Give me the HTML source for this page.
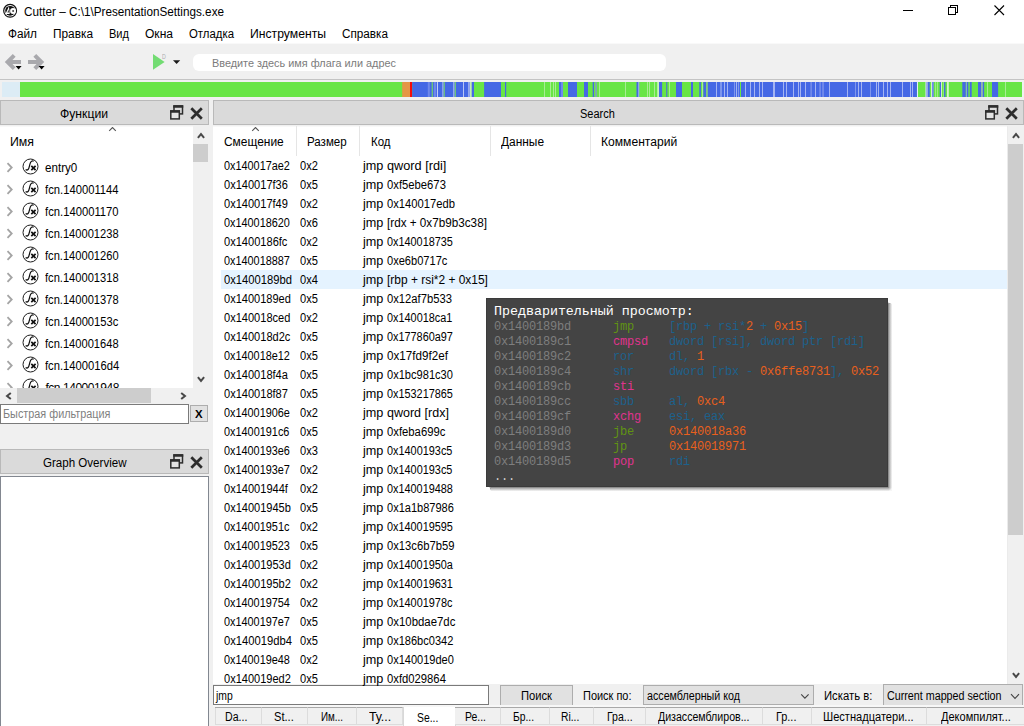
<!DOCTYPE html>
<html lang="ru"><head><meta charset="utf-8"><title>Cutter – C:\1\PresentationSettings.exe</title>
<style>
html,body{margin:0;padding:0}
body{width:1024px;height:726px;overflow:hidden;position:relative;background:#f0f0f0;font-family:"Liberation Sans", sans-serif;font-size:12px;color:#000}
.a{position:absolute;display:block}
.t{position:absolute;white-space:pre;line-height:16px;height:16px;transform-origin:0 0}
.tt{position:absolute;left:493.9px;white-space:pre;font-family:"Liberation Mono", monospace;font-size:12px;letter-spacing:-0.2px;line-height:15px;height:15px}
</style></head><body>
<div class="a" style="left:0px;top:0px;width:1024px;height:44px;background:#fff;"></div>
<svg class="a" style="left:2px;top:3px" width="16" height="16" viewBox="0 0 16 16"><circle cx="8.1" cy="7.8" r="6.4" fill="#fff" stroke="#111" stroke-width="1.2"/><circle cx="8.1" cy="7.8" r="4.9" fill="#111"/><path d="M7.0 3.3 L3.4 10.9 L7.7 10.9 Z" fill="#fff"/><path d="M6.6 6.6 L5.4 9.6 L6.9 9.6 Z" fill="#222"/><circle cx="11.0" cy="8" r="2.9" fill="#fff"/><circle cx="11.1" cy="8" r="1.0" fill="#444"/></svg>
<svg class="a" style="left:896px;top:0" width="128" height="22" viewBox="0 0 128 22" fill="none" stroke="#000" stroke-width="1" shape-rendering="crispEdges"><path d="M7 10.5 H17"/><rect x="52.5" y="7.5" width="7" height="7"/><path d="M54.5 7.5 V5.5 H61.5 V12.5 H59.5"/></svg>
<svg class="a" style="left:990px;top:0" width="20" height="22" viewBox="0 0 20 22" fill="none" stroke="#000" stroke-width="1.1"><path d="M4.5 5.5 L14 15 M14 5.5 L4.5 15"/></svg>
<div class="a" style="left:0px;top:43px;width:1024px;height:1px;background:#f9f9f9;"></div>
<div class="a" style="left:0px;top:44px;width:1024px;height:35px;background:#f0f0f0;"></div>
<div class="a" style="left:0px;top:79px;width:1024px;height:1px;background:#c4c4c4;"></div>
<svg class="a" style="left:0;top:50px" width="50" height="24" viewBox="0 0 50 24"><g fill="none" stroke="#a9a9ad" stroke-width="4" stroke-linejoin="miter"><path d="M14.2 5.4 L7.6 12 L14.2 18.6"/><path d="M8 12 H21"/><path d="M34.8 5.4 L41.4 12 L34.8 18.6"/><path d="M28 12 H41"/></g><path d="M15.6 16 H21.6 L18.6 19.6 Z M38.6 16 H44.6 L41.6 19.6 Z" fill="#000"/></svg>
<svg class="a" style="left:150px;top:50px" width="36" height="24" viewBox="0 0 36 24"><path d="M3 4 L14.6 12 L3 19.8 Z" fill="#73dc73"/><path d="M23 10.2 H30.2 L26.6 14 Z" fill="#1a1a1a"/></svg>
<div class="a" style="left:193px;top:54px;width:473px;height:17px;background:#fff;border-radius:6px;"></div>
<svg class="a" style="left:0;top:82px" width="1024" height="15" viewBox="0 0 1024 15"><rect x="2.00" y="0" width="1020.00" height="15" fill="#68e545"/><rect x="2.00" y="0" width="18.00" height="15" fill="#dcecf5"/><rect x="402.20" y="0" width="7.80" height="15" fill="#e59645"/><rect x="410.00" y="0" width="2.20" height="15" fill="#f40b0b"/><rect x="412.20" y="0" width="61.80" height="15" fill="#4568e5"/><rect x="427.80" y="0" width="2.00" height="15" fill="#7089ea"/><rect x="431.60" y="0" width="1.40" height="15" fill="#6cc37a"/><rect x="433.90" y="0" width="2.00" height="15" fill="#7089ea"/><rect x="436.95" y="0" width="1.02" height="15" fill="#c5d0f5"/><rect x="442.30" y="0" width="1.25" height="15" fill="#a8b8f0"/><rect x="443.70" y="0" width="1.20" height="15" fill="#6cc37a"/><rect x="453.20" y="0" width="1.30" height="15" fill="#a8b8f0"/><rect x="454.70" y="0" width="1.30" height="15" fill="#6cc37a"/><rect x="463.00" y="0" width="1.00" height="15" fill="#b8c5f3"/><rect x="468.20" y="0" width="1.50" height="15" fill="#a8b8f0"/><rect x="470.00" y="0" width="1.70" height="15" fill="#c0f0b0"/><rect x="484.10" y="0" width="16.90" height="15" fill="#4568e5"/><rect x="505.00" y="0" width="1.20" height="15" fill="#4568e5"/><rect x="544.00" y="0" width="1.00" height="15" fill="#a8ec94"/><rect x="550.00" y="0" width="1.00" height="15" fill="#a8ec94"/><rect x="553.00" y="0" width="1.00" height="15" fill="#a8ec94"/><rect x="555.00" y="0" width="1.00" height="15" fill="#a8ec94"/><rect x="599.00" y="0" width="1.00" height="15" fill="#a8ec94"/><rect x="625.00" y="0" width="1.00" height="15" fill="#a8ec94"/><rect x="647.00" y="0" width="1.00" height="15" fill="#a8ec94"/><rect x="649.00" y="0" width="1.00" height="15" fill="#a8ec94"/><rect x="654.00" y="0" width="1.00" height="15" fill="#a8ec94"/><rect x="669.00" y="0" width="1.00" height="15" fill="#a8ec94"/><rect x="702.00" y="0" width="1.00" height="15" fill="#a8ec94"/><rect x="1005.00" y="0" width="1.00" height="15" fill="#a8ec94"/><rect x="987.00" y="0" width="1.00" height="15" fill="#a8ec94"/><rect x="559.00" y="0" width="2.00" height="15" fill="#4568e5"/><rect x="561.00" y="0" width="2.00" height="15" fill="#6f8aec"/><rect x="568.00" y="0" width="9.00" height="15" fill="#4568e5"/><rect x="584.00" y="0" width="4.00" height="15" fill="#4568e5"/><rect x="592.70" y="0" width="1.30" height="15" fill="#4568e5"/><rect x="595.00" y="0" width="2.00" height="15" fill="#7aaeaa"/><rect x="636.50" y="0" width="1.50" height="15" fill="#4568e5"/><rect x="638.00" y="0" width="1.30" height="15" fill="#8ea3ee"/><rect x="657.40" y="0" width="1.40" height="15" fill="#dff7d8"/><rect x="659.00" y="0" width="3.10" height="15" fill="#4568e5"/><rect x="666.30" y="0" width="1.00" height="15" fill="#4568e5"/><rect x="676.00" y="0" width="6.00" height="15" fill="#4568e5"/><rect x="691.00" y="0" width="2.00" height="15" fill="#4568e5"/><rect x="699.30" y="0" width="1.60" height="15" fill="#4568e5"/><rect x="703.40" y="0" width="2.90" height="15" fill="#4568e5"/><rect x="706.30" y="0" width="1.50" height="15" fill="#8fd080"/><rect x="707.80" y="0" width="209.10" height="15" fill="#4568e5"/><rect x="716.00" y="0" width="1.00" height="15" fill="#a4b4f2"/><rect x="724.00" y="0" width="1.00" height="15" fill="#a4b4f2"/><rect x="727.00" y="0" width="1.00" height="15" fill="#a4b4f2"/><rect x="736.00" y="0" width="1.00" height="15" fill="#a4b4f2"/><rect x="745.00" y="0" width="1.00" height="15" fill="#a4b4f2"/><rect x="750.00" y="0" width="1.00" height="15" fill="#a4b4f2"/><rect x="754.00" y="0" width="1.00" height="15" fill="#a4b4f2"/><rect x="759.00" y="0" width="1.00" height="15" fill="#a4b4f2"/><rect x="762.00" y="0" width="1.00" height="15" fill="#a4b4f2"/><rect x="783.00" y="0" width="1.00" height="15" fill="#a4b4f2"/><rect x="786.00" y="0" width="1.00" height="15" fill="#a4b4f2"/><rect x="793.00" y="0" width="1.00" height="15" fill="#a4b4f2"/><rect x="798.00" y="0" width="1.00" height="15" fill="#a4b4f2"/><rect x="800.00" y="0" width="1.00" height="15" fill="#a4b4f2"/><rect x="805.00" y="0" width="1.00" height="15" fill="#a4b4f2"/><rect x="815.00" y="0" width="1.00" height="15" fill="#a4b4f2"/><rect x="829.00" y="0" width="1.00" height="15" fill="#a4b4f2"/><rect x="847.00" y="0" width="1.00" height="15" fill="#a4b4f2"/><rect x="858.00" y="0" width="1.00" height="15" fill="#a4b4f2"/><rect x="861.00" y="0" width="1.00" height="15" fill="#a4b4f2"/><rect x="876.00" y="0" width="1.00" height="15" fill="#a4b4f2"/><rect x="878.00" y="0" width="1.00" height="15" fill="#a4b4f2"/><rect x="883.00" y="0" width="1.00" height="15" fill="#a4b4f2"/><rect x="887.00" y="0" width="1.00" height="15" fill="#a4b4f2"/><rect x="890.00" y="0" width="1.00" height="15" fill="#a4b4f2"/><rect x="902.00" y="0" width="1.00" height="15" fill="#a4b4f2"/><rect x="910.00" y="0" width="1.00" height="15" fill="#a4b4f2"/><rect x="912.00" y="0" width="1.00" height="15" fill="#a4b4f2"/><rect x="734.00" y="0" width="1.00" height="15" fill="#8097ec"/><rect x="738.00" y="0" width="1.00" height="15" fill="#8097ec"/><rect x="855.00" y="0" width="1.00" height="15" fill="#8097ec"/><rect x="870.00" y="0" width="1.00" height="15" fill="#8097ec"/><rect x="720.00" y="0" width="2.00" height="15" fill="#7c95ec"/><rect x="810.30" y="0" width="1.70" height="15" fill="#7089ea"/><rect x="819.20" y="0" width="1.80" height="15" fill="#7089ea"/><rect x="822.10" y="0" width="1.90" height="15" fill="#7089ea"/><rect x="740.00" y="0" width="1.00" height="15" fill="#68e545"/><rect x="773.00" y="0" width="2.00" height="15" fill="#a4b4f2"/><rect x="917.00" y="0" width="1.00" height="15" fill="#e4eef5"/><rect x="925.30" y="0" width="0.70" height="15" fill="#c4e6d0"/><rect x="926.00" y="0" width="1.90" height="15" fill="#9fb0f0"/><rect x="927.90" y="0" width="1.85" height="15" fill="#4568e5"/><rect x="931.00" y="0" width="1.00" height="15" fill="#d0f0c8"/><rect x="932.00" y="0" width="1.80" height="15" fill="#6f8aec"/><rect x="935.00" y="0" width="0.80" height="15" fill="#a8ec94"/><rect x="937.00" y="0" width="0.80" height="15" fill="#a8ec94"/><rect x="939.70" y="0" width="1.30" height="15" fill="#4568e5"/><rect x="941.20" y="0" width="0.80" height="15" fill="#e8f9e2"/><rect x="943.40" y="0" width="0.60" height="15" fill="#a8ec94"/><rect x="944.10" y="0" width="1.30" height="15" fill="#4568e5"/><rect x="947.00" y="0" width="1.80" height="15" fill="#d5f3cb"/><rect x="962.30" y="0" width="3.40" height="15" fill="#4568e5"/><rect x="966.20" y="0" width="0.70" height="15" fill="#8ea3ee"/><rect x="967.00" y="0" width="1.30" height="15" fill="#4568e5"/><rect x="969.80" y="0" width="1.90" height="15" fill="#4568e5"/><rect x="978.00" y="0" width="3.00" height="15" fill="#4568e5"/><rect x="981.00" y="0" width="1.90" height="15" fill="#8fb4b0"/><rect x="982.90" y="0" width="1.20" height="15" fill="#4568e5"/><rect x="992.00" y="0" width="6.10" height="15" fill="#4568e5"/></svg>
<div class="a" style="left:0px;top:100px;width:209px;height:25px;background:#dadada;border:1px solid #b9b9b9;box-sizing:border-box;"></div>
<svg class="a" style="left:170.4px;top:105px" width="14" height="15" viewBox="0 0 14 15"><g fill="none" stroke="#2d2d2d" stroke-width="1.5"><rect x="4.0" y="1.0" width="8.5" height="7.9" fill="#dcdcdc"/><rect x="0.8" y="6.0" width="8.5" height="7.9" fill="#e4e4e4"/></g><path d="M3.25 1.5 H13.25 M0.05 6.5 H10.05" stroke="#2d2d2d" stroke-width="2.6"/></svg>
<svg class="a" style="left:190.45px;top:106.5px" width="14" height="14" viewBox="0 0 14 14"><path d="M1.3 1.3 L11.8 11.8 M11.8 1.3 L1.3 11.8" stroke="#2d2d2d" stroke-width="2.7"/></svg>
<div class="a" style="left:0px;top:126px;width:193px;height:262px;background:#fff;"></div>
<div class="a" style="left:0px;top:126px;width:193px;height:1px;background:#f8f8f8;"></div>
<svg class="a" style="left:107px;top:127px" width="10" height="6" viewBox="0 0 10 6"><path d="M2.2 3.9 L5.5 0.5 L8.8 3.9" fill="none" stroke="#555" stroke-width="1.1"/></svg>
<div class="a" style="left:0;top:126px;width:193px;height:262px;overflow:hidden"><svg class="a" style="left:6px;top:36.0px" width="8" height="11" viewBox="0 0 8 11"><path d="M1.5 1.2 L5.7 5.5 L1.5 9.8" fill="none" stroke="#a4a4a4" stroke-width="1.8"/></svg><svg class="a" style="left:22.1px;top:32.2px" width="17" height="17" viewBox="0 0 17 17"><circle cx="8.5" cy="8.5" r="7.5" fill="#fff" stroke="#1c1c1c" stroke-width="1"/><path d="M3.6 11.6 C5.8 12.8 6.7 11.2 7.3 8.6 C8.0 5.4 8.6 2.3 11.7 3.1" fill="none" stroke="#111" stroke-width="1.25"/><path d="M9.3 7.8 L13.6 12.1 M13.6 7.8 L9.3 12.1" stroke="#111" stroke-width="1.7"/></svg><svg class="a" style="left:6px;top:58.0px" width="8" height="11" viewBox="0 0 8 11"><path d="M1.5 1.2 L5.7 5.5 L1.5 9.8" fill="none" stroke="#a4a4a4" stroke-width="1.8"/></svg><svg class="a" style="left:22.1px;top:54.2px" width="17" height="17" viewBox="0 0 17 17"><circle cx="8.5" cy="8.5" r="7.5" fill="#fff" stroke="#1c1c1c" stroke-width="1"/><path d="M3.6 11.6 C5.8 12.8 6.7 11.2 7.3 8.6 C8.0 5.4 8.6 2.3 11.7 3.1" fill="none" stroke="#111" stroke-width="1.25"/><path d="M9.3 7.8 L13.6 12.1 M13.6 7.8 L9.3 12.1" stroke="#111" stroke-width="1.7"/></svg><svg class="a" style="left:6px;top:80.0px" width="8" height="11" viewBox="0 0 8 11"><path d="M1.5 1.2 L5.7 5.5 L1.5 9.8" fill="none" stroke="#a4a4a4" stroke-width="1.8"/></svg><svg class="a" style="left:22.1px;top:76.2px" width="17" height="17" viewBox="0 0 17 17"><circle cx="8.5" cy="8.5" r="7.5" fill="#fff" stroke="#1c1c1c" stroke-width="1"/><path d="M3.6 11.6 C5.8 12.8 6.7 11.2 7.3 8.6 C8.0 5.4 8.6 2.3 11.7 3.1" fill="none" stroke="#111" stroke-width="1.25"/><path d="M9.3 7.8 L13.6 12.1 M13.6 7.8 L9.3 12.1" stroke="#111" stroke-width="1.7"/></svg><svg class="a" style="left:6px;top:102.0px" width="8" height="11" viewBox="0 0 8 11"><path d="M1.5 1.2 L5.7 5.5 L1.5 9.8" fill="none" stroke="#a4a4a4" stroke-width="1.8"/></svg><svg class="a" style="left:22.1px;top:98.2px" width="17" height="17" viewBox="0 0 17 17"><circle cx="8.5" cy="8.5" r="7.5" fill="#fff" stroke="#1c1c1c" stroke-width="1"/><path d="M3.6 11.6 C5.8 12.8 6.7 11.2 7.3 8.6 C8.0 5.4 8.6 2.3 11.7 3.1" fill="none" stroke="#111" stroke-width="1.25"/><path d="M9.3 7.8 L13.6 12.1 M13.6 7.8 L9.3 12.1" stroke="#111" stroke-width="1.7"/></svg><svg class="a" style="left:6px;top:124.0px" width="8" height="11" viewBox="0 0 8 11"><path d="M1.5 1.2 L5.7 5.5 L1.5 9.8" fill="none" stroke="#a4a4a4" stroke-width="1.8"/></svg><svg class="a" style="left:22.1px;top:120.2px" width="17" height="17" viewBox="0 0 17 17"><circle cx="8.5" cy="8.5" r="7.5" fill="#fff" stroke="#1c1c1c" stroke-width="1"/><path d="M3.6 11.6 C5.8 12.8 6.7 11.2 7.3 8.6 C8.0 5.4 8.6 2.3 11.7 3.1" fill="none" stroke="#111" stroke-width="1.25"/><path d="M9.3 7.8 L13.6 12.1 M13.6 7.8 L9.3 12.1" stroke="#111" stroke-width="1.7"/></svg><svg class="a" style="left:6px;top:146.0px" width="8" height="11" viewBox="0 0 8 11"><path d="M1.5 1.2 L5.7 5.5 L1.5 9.8" fill="none" stroke="#a4a4a4" stroke-width="1.8"/></svg><svg class="a" style="left:22.1px;top:142.2px" width="17" height="17" viewBox="0 0 17 17"><circle cx="8.5" cy="8.5" r="7.5" fill="#fff" stroke="#1c1c1c" stroke-width="1"/><path d="M3.6 11.6 C5.8 12.8 6.7 11.2 7.3 8.6 C8.0 5.4 8.6 2.3 11.7 3.1" fill="none" stroke="#111" stroke-width="1.25"/><path d="M9.3 7.8 L13.6 12.1 M13.6 7.8 L9.3 12.1" stroke="#111" stroke-width="1.7"/></svg><svg class="a" style="left:6px;top:168.0px" width="8" height="11" viewBox="0 0 8 11"><path d="M1.5 1.2 L5.7 5.5 L1.5 9.8" fill="none" stroke="#a4a4a4" stroke-width="1.8"/></svg><svg class="a" style="left:22.1px;top:164.2px" width="17" height="17" viewBox="0 0 17 17"><circle cx="8.5" cy="8.5" r="7.5" fill="#fff" stroke="#1c1c1c" stroke-width="1"/><path d="M3.6 11.6 C5.8 12.8 6.7 11.2 7.3 8.6 C8.0 5.4 8.6 2.3 11.7 3.1" fill="none" stroke="#111" stroke-width="1.25"/><path d="M9.3 7.8 L13.6 12.1 M13.6 7.8 L9.3 12.1" stroke="#111" stroke-width="1.7"/></svg><svg class="a" style="left:6px;top:190.0px" width="8" height="11" viewBox="0 0 8 11"><path d="M1.5 1.2 L5.7 5.5 L1.5 9.8" fill="none" stroke="#a4a4a4" stroke-width="1.8"/></svg><svg class="a" style="left:22.1px;top:186.2px" width="17" height="17" viewBox="0 0 17 17"><circle cx="8.5" cy="8.5" r="7.5" fill="#fff" stroke="#1c1c1c" stroke-width="1"/><path d="M3.6 11.6 C5.8 12.8 6.7 11.2 7.3 8.6 C8.0 5.4 8.6 2.3 11.7 3.1" fill="none" stroke="#111" stroke-width="1.25"/><path d="M9.3 7.8 L13.6 12.1 M13.6 7.8 L9.3 12.1" stroke="#111" stroke-width="1.7"/></svg><svg class="a" style="left:6px;top:212.0px" width="8" height="11" viewBox="0 0 8 11"><path d="M1.5 1.2 L5.7 5.5 L1.5 9.8" fill="none" stroke="#a4a4a4" stroke-width="1.8"/></svg><svg class="a" style="left:22.1px;top:208.2px" width="17" height="17" viewBox="0 0 17 17"><circle cx="8.5" cy="8.5" r="7.5" fill="#fff" stroke="#1c1c1c" stroke-width="1"/><path d="M3.6 11.6 C5.8 12.8 6.7 11.2 7.3 8.6 C8.0 5.4 8.6 2.3 11.7 3.1" fill="none" stroke="#111" stroke-width="1.25"/><path d="M9.3 7.8 L13.6 12.1 M13.6 7.8 L9.3 12.1" stroke="#111" stroke-width="1.7"/></svg><svg class="a" style="left:6px;top:234.0px" width="8" height="11" viewBox="0 0 8 11"><path d="M1.5 1.2 L5.7 5.5 L1.5 9.8" fill="none" stroke="#a4a4a4" stroke-width="1.8"/></svg><svg class="a" style="left:22.1px;top:230.2px" width="17" height="17" viewBox="0 0 17 17"><circle cx="8.5" cy="8.5" r="7.5" fill="#fff" stroke="#1c1c1c" stroke-width="1"/><path d="M3.6 11.6 C5.8 12.8 6.7 11.2 7.3 8.6 C8.0 5.4 8.6 2.3 11.7 3.1" fill="none" stroke="#111" stroke-width="1.25"/><path d="M9.3 7.8 L13.6 12.1 M13.6 7.8 L9.3 12.1" stroke="#111" stroke-width="1.7"/></svg><svg class="a" style="left:6px;top:256.0px" width="8" height="11" viewBox="0 0 8 11"><path d="M1.5 1.2 L5.7 5.5 L1.5 9.8" fill="none" stroke="#a4a4a4" stroke-width="1.8"/></svg><svg class="a" style="left:22.1px;top:252.2px" width="17" height="17" viewBox="0 0 17 17"><circle cx="8.5" cy="8.5" r="7.5" fill="#fff" stroke="#1c1c1c" stroke-width="1"/><path d="M3.6 11.6 C5.8 12.8 6.7 11.2 7.3 8.6 C8.0 5.4 8.6 2.3 11.7 3.1" fill="none" stroke="#111" stroke-width="1.25"/><path d="M9.3 7.8 L13.6 12.1 M13.6 7.8 L9.3 12.1" stroke="#111" stroke-width="1.7"/></svg></div>
<div class="a" style="left:0;top:126px;width:193px;height:262px;overflow:hidden"><div id="lastfn" class="a" style="left:45.4px;top:253.8px;font-size:12px;line-height:16px;white-space:pre;letter-spacing:-0.45px">fcn.140001948</div></div>
<div class="a" style="left:193px;top:126px;width:16px;height:262px;background:#f0f0f0;"></div>
<div class="a" style="left:193px;top:144px;width:15px;height:18px;background:#cdcdcd;"></div>
<svg class="a" style="left:196.5px;top:132.3px" width="8" height="8" viewBox="0 0 8 8"><path d="M0.9 5.8 L4 2.0 L7.1 5.8" fill="none" stroke="#484848" stroke-width="2"/></svg>
<svg class="a" style="left:196.5px;top:375.6px" width="8" height="8" viewBox="0 0 8 8"><path d="M0.9 1.2 L4 5.0 L7.1 1.2" fill="none" stroke="#484848" stroke-width="2"/></svg>
<div class="a" style="left:0px;top:388px;width:193px;height:15px;background:#f0f0f0;"></div>
<div class="a" style="left:17px;top:388px;width:134px;height:15px;background:#cdcdcd;"></div>
<svg class="a" style="left:4.6px;top:391.5px" width="8" height="8" viewBox="0 0 8 8"><path d="M5.8 0.9 L2.0 4 L5.8 7.1" fill="none" stroke="#484848" stroke-width="2"/></svg>
<svg class="a" style="left:180.3px;top:391.5px" width="8" height="8" viewBox="0 0 8 8"><path d="M1.2 0.9 L5.0 4 L1.2 7.1" fill="none" stroke="#484848" stroke-width="2"/></svg>
<div class="a" style="left:0px;top:404px;width:189px;height:20px;background:#fff;border:1px solid #7a7a7a;box-sizing:border-box;"></div>
<div class="a" style="left:190px;top:405px;width:18px;height:17px;background:#e1e1e1;border:1px solid #adadad;box-sizing:border-box;"></div>
<div class="a" style="left:0px;top:449px;width:209px;height:25px;background:#dadada;border:1px solid #b9b9b9;box-sizing:border-box;"></div>
<svg class="a" style="left:170.4px;top:454px" width="14" height="15" viewBox="0 0 14 15"><g fill="none" stroke="#2d2d2d" stroke-width="1.5"><rect x="4.0" y="1.0" width="8.5" height="7.9" fill="#dcdcdc"/><rect x="0.8" y="6.0" width="8.5" height="7.9" fill="#e4e4e4"/></g><path d="M3.25 1.5 H13.25 M0.05 6.5 H10.05" stroke="#2d2d2d" stroke-width="2.6"/></svg>
<svg class="a" style="left:190.45px;top:455.5px" width="14" height="14" viewBox="0 0 14 14"><path d="M1.3 1.3 L11.8 11.8 M11.8 1.3 L1.3 11.8" stroke="#2d2d2d" stroke-width="2.7"/></svg>
<div class="a" style="left:0px;top:476px;width:209px;height:260px;background:#fff;border:1px solid #828790;box-sizing:border-box;"></div>
<div class="a" style="left:213px;top:100px;width:811px;height:25px;background:#dadada;border:1px solid #b9b9b9;box-sizing:border-box;"></div>
<svg class="a" style="left:985.2px;top:105px" width="14" height="15" viewBox="0 0 14 15"><g fill="none" stroke="#2d2d2d" stroke-width="1.5"><rect x="4.0" y="1.0" width="8.5" height="7.9" fill="#dcdcdc"/><rect x="0.8" y="6.0" width="8.5" height="7.9" fill="#e4e4e4"/></g><path d="M3.25 1.5 H13.25 M0.05 6.5 H10.05" stroke="#2d2d2d" stroke-width="2.6"/></svg>
<svg class="a" style="left:1005.35px;top:106.5px" width="14" height="14" viewBox="0 0 14 14"><path d="M1.3 1.3 L11.8 11.8 M11.8 1.3 L1.3 11.8" stroke="#2d2d2d" stroke-width="2.7"/></svg>
<div class="a" style="left:213px;top:126px;width:794px;height:558px;background:#fff;"></div>
<div class="a" style="left:213px;top:126px;width:794px;height:1px;background:#f8f8f8;"></div>
<div class="a" style="left:1007px;top:126px;width:1px;height:558px;background:#ebebeb;"></div>
<div class="a" style="left:296px;top:126px;width:1px;height:30px;background:#e5e5e5;"></div>
<div class="a" style="left:359px;top:126px;width:1px;height:30px;background:#e5e5e5;"></div>
<div class="a" style="left:490px;top:126px;width:1px;height:30px;background:#e5e5e5;"></div>
<div class="a" style="left:590px;top:126px;width:1px;height:30px;background:#e5e5e5;"></div>
<svg class="a" style="left:250px;top:127px" width="10" height="6" viewBox="0 0 10 6"><path d="M2.2 3.9 L5.5 0.5 L8.8 3.9" fill="none" stroke="#555" stroke-width="1.1"/></svg>
<div class="a" style="left:221px;top:270px;width:786px;height:19px;background:#e5f3ff;"></div>
<div class="a" style="left:1008px;top:126px;width:16px;height:558px;background:#f0f0f0;"></div>
<div class="a" style="left:1008px;top:144px;width:15px;height:391px;background:#cdcdcd;"></div>
<svg class="a" style="left:1011.5px;top:132.3px" width="8" height="8" viewBox="0 0 8 8"><path d="M0.9 5.8 L4 2.0 L7.1 5.8" fill="none" stroke="#484848" stroke-width="2"/></svg>
<svg class="a" style="left:1011.5px;top:672.3px" width="8" height="8" viewBox="0 0 8 8"><path d="M0.9 1.2 L4 5.0 L7.1 1.2" fill="none" stroke="#484848" stroke-width="2"/></svg>
<div class="a" style="left:213px;top:685px;width:276px;height:20px;background:#fff;border:1px solid #7a7a7a;box-sizing:border-box;"></div>
<div class="a" style="left:500px;top:685px;width:73px;height:21px;background:#e1e1e1;border:1px solid #adadad;box-sizing:border-box;"></div>
<div class="a" style="left:643px;top:685px;width:171px;height:20px;background:#e1e1e1;border:1px solid #adadad;box-sizing:border-box;"></div>
<svg class="a" style="left:800px;top:692.5px" width="10" height="7" viewBox="0 0 10 7"><path d="M1.2 1.3 L4.9 5.2 L8.6 1.3" fill="none" stroke="#444" stroke-width="1.1"/></svg>
<div class="a" style="left:883px;top:684px;width:140px;height:23px;background:#e1e1e1;border:1px solid #adadad;box-sizing:border-box;"></div>
<svg class="a" style="left:1010px;top:692.5px" width="10" height="7" viewBox="0 0 10 7"><path d="M1 1.2 L5 5.4 L9 1.2" fill="none" stroke="#444" stroke-width="1.1"/></svg>
<div class="a" style="left:213px;top:705px;width:811px;height:2px;background:#f7f7f7;"></div>
<div class="a" style="left:215px;top:707px;width:47px;height:18px;background:#f0f0f0;border:1px solid #dcdcdc;border-top:1px solid #a8a8a8;border-left:none;box-sizing:border-box;"></div>
<div class="a" style="left:262px;top:707px;width:46px;height:18px;background:#f0f0f0;border:1px solid #dcdcdc;border-top:1px solid #a8a8a8;border-left:none;box-sizing:border-box;"></div>
<div class="a" style="left:308px;top:707px;width:49px;height:18px;background:#f0f0f0;border:1px solid #dcdcdc;border-top:1px solid #a8a8a8;border-left:none;box-sizing:border-box;"></div>
<div class="a" style="left:357px;top:707px;width:46px;height:18px;background:#f0f0f0;border:1px solid #dcdcdc;border-top:1px solid #a8a8a8;border-left:none;box-sizing:border-box;"></div>
<div class="a" style="left:403px;top:707px;width:53px;height:21px;background:#fff;border-left:1px solid #d8d8d8;border-right:1px solid #d8d8d8;box-sizing:border-box;"></div>
<div class="a" style="left:455px;top:707px;width:46px;height:18px;background:#f0f0f0;border:1px solid #dcdcdc;border-top:1px solid #a8a8a8;border-left:none;box-sizing:border-box;"></div>
<div class="a" style="left:501px;top:707px;width:48.5px;height:18px;background:#f0f0f0;border:1px solid #dcdcdc;border-top:1px solid #a8a8a8;border-left:none;box-sizing:border-box;"></div>
<div class="a" style="left:549.5px;top:707px;width:44.5px;height:18px;background:#f0f0f0;border:1px solid #dcdcdc;border-top:1px solid #a8a8a8;border-left:none;box-sizing:border-box;"></div>
<div class="a" style="left:594px;top:707px;width:52px;height:18px;background:#f0f0f0;border:1px solid #dcdcdc;border-top:1px solid #a8a8a8;border-left:none;box-sizing:border-box;"></div>
<div class="a" style="left:646px;top:707px;width:117px;height:18px;background:#f0f0f0;border:1px solid #dcdcdc;border-top:1px solid #a8a8a8;border-left:none;box-sizing:border-box;"></div>
<div class="a" style="left:763px;top:707px;width:48.5px;height:18px;background:#f0f0f0;border:1px solid #dcdcdc;border-top:1px solid #a8a8a8;border-left:none;box-sizing:border-box;"></div>
<div class="a" style="left:811.5px;top:707px;width:115.0px;height:18px;background:#f0f0f0;border:1px solid #dcdcdc;border-top:1px solid #a8a8a8;border-left:none;box-sizing:border-box;"></div>
<div class="a" style="left:926.5px;top:707px;width:103.5px;height:18px;background:#f0f0f0;border:1px solid #dcdcdc;border-top:1px solid #a8a8a8;border-left:none;box-sizing:border-box;"></div>
<div class="a" style="left:215px;top:708px;width:1px;height:17px;background:#dcdcdc;"></div>
<div class="a" style="left:888px;top:304px;width:4px;height:185px;background:linear-gradient(to right,#7a7a7a,#b9b9b9 40%,#f6f6f6);"></div>
<div class="a" style="left:491px;top:487px;width:397px;height:4px;background:linear-gradient(to bottom,#7a7a7a,#b9b9b9 40%,#f6f6f6);"></div>
<div class="a" style="left:888px;top:487px;width:4px;height:4px;background:radial-gradient(circle at 0 0,#7a7a7a,#b9b9b9 1.6px,#f6f6f6 4px);"></div>
<svg class="a" style="left:888px;top:300px" width="4" height="4" viewBox="0 0 4 4"><path d="M0 4 L0 2.4 L3.6 4 Z" fill="#9a9a9a"/></svg>
<svg class="a" style="left:487px;top:487px" width="4" height="4" viewBox="0 0 4 4"><path d="M4 0 L2.4 0 L4 3.6 Z" fill="#9a9a9a"/></svg>
<div class="a" style="left:486px;top:298px;width:402px;height:189px;background:#444444;border:1px solid #3b3b3b;box-sizing:border-box;"></div>
<div class="tt" style="top:304px;font-size:13.33px;letter-spacing:0;color:#fff">Предварительный просмотр:</div><div class="tt" style="top:320px"><span style="color:#7e7e7e">0x1400189bd</span>      <span style="color:#609313">jmp</span>     <span style="color:#1c618c">[rbp + rsi*</span><span style="color:#e9601d">2</span><span style="color:#1c618c"> + </span><span style="color:#e9601d">0x15</span><span style="color:#1c618c">]</span></div><div class="tt" style="top:335px"><span style="color:#7e7e7e">0x1400189c1</span>      <span style="color:#e0338f">cmpsd</span>   <span style="color:#1c618c">dword [rsi], dword ptr [rdi]</span></div><div class="tt" style="top:350px"><span style="color:#7e7e7e">0x1400189c2</span>      <span style="color:#1c618c">ror</span>     <span style="color:#1c618c">dl, </span><span style="color:#e9601d">1</span></div><div class="tt" style="top:365px"><span style="color:#7e7e7e">0x1400189c4</span>      <span style="color:#1c618c">shr</span>     <span style="color:#1c618c">dword [rbx - </span><span style="color:#e9601d">0x6ffe8731</span><span style="color:#1c618c">], </span><span style="color:#e9601d">0x52</span></div><div class="tt" style="top:380px"><span style="color:#7e7e7e">0x1400189cb</span>      <span style="color:#e0338f">sti</span>     </div><div class="tt" style="top:395px"><span style="color:#7e7e7e">0x1400189cc</span>      <span style="color:#1c618c">sbb</span>     <span style="color:#1c618c">al, </span><span style="color:#e9601d">0xc4</span></div><div class="tt" style="top:410px"><span style="color:#7e7e7e">0x1400189cf</span>      <span style="color:#e0338f">xchg</span>    <span style="color:#1c618c">esi, eax</span></div><div class="tt" style="top:425px"><span style="color:#7e7e7e">0x1400189d0</span>      <span style="color:#609313">jbe</span>     <span style="color:#e9601d">0x140018a36</span></div><div class="tt" style="top:440px"><span style="color:#7e7e7e">0x1400189d3</span>      <span style="color:#609313">jp</span>      <span style="color:#e9601d">0x140018971</span></div><div class="tt" style="top:455px"><span style="color:#7e7e7e">0x1400189d5</span>      <span style="color:#e0338f">pop</span>     <span style="color:#1c618c">rdi</span></div><div class="tt" style="top:470px;color:#d2d2d2">...</div>
<div class="t" id="t1" style="left:24px;top:3.84px;transform:scaleX(0.9767);">Cutter – C:\1\PresentationSettings.exe</div>
<div class="t" id="t2" style="left:8px;top:25.84px;transform:scaleX(0.9825);">Файл</div>
<div class="t" id="t3" style="left:53px;top:25.84px;transform:scaleX(0.9865);">Правка</div>
<div class="t" id="t4" style="left:109px;top:25.84px;transform:scaleX(0.9209);">Вид</div>
<div class="t" id="t5" style="left:145px;top:25.84px;transform:scaleX(1.0039);">Окна</div>
<div class="t" id="t6" style="left:189px;top:25.84px;transform:scaleX(0.9486);">Отладка</div>
<div class="t" id="t7" style="left:250px;top:25.84px;transform:scaleX(1.0157);">Инструменты</div>
<div class="t" id="t8" style="left:342px;top:25.84px;transform:scaleX(0.9771);">Справка</div>
<div class="t" id="t9" style="left:161.5px;top:48.75px;font-size:6.5px;color:#adadad;transform:scaleX(0.8080);">D</div>
<div class="t" id="t10" style="left:212.4px;top:55.02px;font-size:11.5px;color:#7b7b7b;transform:scaleX(0.9444);">Введите здесь имя флага или адрес</div>
<div class="t" id="t11" style="left:59.7px;top:105.84px;transform:scaleX(1.0152);">Функции</div>
<div class="t" id="t12" style="left:10px;top:133.84px;transform:scaleX(1.0267);">Имя</div>
<div class="t" id="t13" style="left:45.4px;top:159.84px;transform:scaleX(0.9682);">entry0</div>
<div class="t" id="t14" style="left:45.4px;top:181.84px;transform:scaleX(0.9374);">fcn.140001144</div>
<div class="t" id="t15" style="left:45.4px;top:203.84px;transform:scaleX(0.9374);">fcn.140001170</div>
<div class="t" id="t16" style="left:45.4px;top:225.84px;transform:scaleX(0.9269);">fcn.140001238</div>
<div class="t" id="t17" style="left:45.4px;top:247.84px;transform:scaleX(0.9269);">fcn.140001260</div>
<div class="t" id="t18" style="left:45.4px;top:269.84px;transform:scaleX(0.9269);">fcn.140001318</div>
<div class="t" id="t19" style="left:45.4px;top:291.84px;transform:scaleX(0.9269);">fcn.140001378</div>
<div class="t" id="t20" style="left:45.4px;top:313.84px;transform:scaleX(0.9310);">fcn.14000153c</div>
<div class="t" id="t21" style="left:45.4px;top:335.84px;transform:scaleX(0.9269);">fcn.140001648</div>
<div class="t" id="t22" style="left:45.4px;top:357.84px;transform:scaleX(0.9357);">fcn.1400016d4</div>
<div class="t" id="t23" style="left:2.5px;top:405.84px;color:#7f7f7f;transform:scaleX(0.9034);">Быстрая фильтрация</div>
<div class="t" id="t24" style="left:194.8px;top:406.19px;font-size:11px;transform:scaleX(1.0349);font-weight:bold;">X</div>
<div class="t" id="t25" style="left:42.5px;top:454.84px;transform:scaleX(0.9631);">Graph Overview</div>
<div class="t" id="t26" style="left:579.8px;top:105.84px;transform:scaleX(0.9150);">Search</div>
<div class="t" id="t27" style="left:223.5px;top:133.84px;transform:scaleX(0.9947);">Смещение</div>
<div class="t" id="t28" style="left:307px;top:133.84px;transform:scaleX(0.9624);">Размер</div>
<div class="t" id="t29" style="left:370.5px;top:133.84px;transform:scaleX(0.9556);">Код</div>
<div class="t" id="t30" style="left:501px;top:133.84px;transform:scaleX(0.9917);">Данные</div>
<div class="t" id="t31" style="left:601.4px;top:133.84px;transform:scaleX(1.0080);">Комментарий</div>
<div class="t" id="t32" style="left:224px;top:157.84px;transform:scaleX(0.9058);">0x140017ae2</div>
<div class="t" id="t33" style="left:300px;top:157.84px;transform:scaleX(0.9246);">0x2</div>
<div class="t" id="t34" style="left:363px;top:157.84px;transform:scaleX(1.0546);">jmp</div>
<div class="t" id="t35" style="left:387px;top:157.84px;transform:scaleX(1.0601);">qword [rdi]</div>
<div class="t" id="t36" style="left:224px;top:176.84px;transform:scaleX(0.9207);">0x140017f36</div>
<div class="t" id="t37" style="left:300px;top:176.84px;transform:scaleX(0.9246);">0x5</div>
<div class="t" id="t38" style="left:363px;top:176.84px;transform:scaleX(1.0546);">jmp</div>
<div class="t" id="t39" style="left:387px;top:176.84px;transform:scaleX(0.9389);">0xf5ebe673</div>
<div class="t" id="t40" style="left:224px;top:195.84px;transform:scaleX(0.9207);">0x140017f49</div>
<div class="t" id="t41" style="left:300px;top:195.84px;transform:scaleX(0.9246);">0x2</div>
<div class="t" id="t42" style="left:363px;top:195.84px;transform:scaleX(1.0546);">jmp</div>
<div class="t" id="t43" style="left:387px;top:195.84px;transform:scaleX(0.9333);">0x140017edb</div>
<div class="t" id="t44" style="left:224px;top:214.84px;transform:scaleX(0.9058);">0x140018620</div>
<div class="t" id="t45" style="left:300px;top:214.84px;transform:scaleX(0.9246);">0x6</div>
<div class="t" id="t46" style="left:363px;top:214.84px;transform:scaleX(1.0546);">jmp</div>
<div class="t" id="t47" style="left:387px;top:214.84px;transform:scaleX(0.9755);">[rdx + 0x7b9b3c38]</div>
<div class="t" id="t48" style="left:224px;top:233.84px;transform:scaleX(0.9224);">0x1400186fc</div>
<div class="t" id="t49" style="left:300px;top:233.84px;transform:scaleX(0.9246);">0x2</div>
<div class="t" id="t50" style="left:363px;top:233.84px;transform:scaleX(1.0546);">jmp</div>
<div class="t" id="t51" style="left:387px;top:233.84px;transform:scaleX(0.9058);">0x140018735</div>
<div class="t" id="t52" style="left:224px;top:252.84px;transform:scaleX(0.9058);">0x140018887</div>
<div class="t" id="t53" style="left:300px;top:252.84px;transform:scaleX(0.9246);">0x5</div>
<div class="t" id="t54" style="left:363px;top:252.84px;transform:scaleX(1.0546);">jmp</div>
<div class="t" id="t55" style="left:387px;top:252.84px;transform:scaleX(0.9237);">0xe6b0717c</div>
<div class="t" id="t56" style="left:224px;top:271.84px;transform:scaleX(0.9333);">0x1400189bd</div>
<div class="t" id="t57" style="left:300px;top:271.84px;transform:scaleX(0.9246);">0x4</div>
<div class="t" id="t58" style="left:363px;top:271.84px;transform:scaleX(1.0546);">jmp</div>
<div class="t" id="t59" style="left:387px;top:271.84px;transform:scaleX(0.9952);">[rbp + rsi*2 + 0x15]</div>
<div class="t" id="t60" style="left:224px;top:290.84px;transform:scaleX(0.9196);">0x1400189ed</div>
<div class="t" id="t61" style="left:300px;top:290.84px;transform:scaleX(0.9246);">0x5</div>
<div class="t" id="t62" style="left:363px;top:290.84px;transform:scaleX(1.0546);">jmp</div>
<div class="t" id="t63" style="left:387px;top:290.84px;transform:scaleX(0.9351);">0x12af7b533</div>
<div class="t" id="t64" style="left:224px;top:309.84px;transform:scaleX(0.9212);">0x140018ced</div>
<div class="t" id="t65" style="left:300px;top:309.84px;transform:scaleX(0.9246);">0x2</div>
<div class="t" id="t66" style="left:363px;top:309.84px;transform:scaleX(1.0546);">jmp</div>
<div class="t" id="t67" style="left:387px;top:309.84px;transform:scaleX(0.9073);">0x140018ca1</div>
<div class="t" id="t68" style="left:224px;top:328.84px;transform:scaleX(0.9212);">0x140018d2c</div>
<div class="t" id="t69" style="left:300px;top:328.84px;transform:scaleX(0.9246);">0x5</div>
<div class="t" id="t70" style="left:363px;top:328.84px;transform:scaleX(1.0546);">jmp</div>
<div class="t" id="t71" style="left:387px;top:328.84px;transform:scaleX(0.9058);">0x177860a97</div>
<div class="t" id="t72" style="left:224px;top:347.84px;transform:scaleX(0.9058);">0x140018e12</div>
<div class="t" id="t73" style="left:300px;top:347.84px;transform:scaleX(0.9246);">0x5</div>
<div class="t" id="t74" style="left:363px;top:347.84px;transform:scaleX(1.0546);">jmp</div>
<div class="t" id="t75" style="left:387px;top:347.84px;transform:scaleX(0.9710);">0x17fd9f2ef</div>
<div class="t" id="t76" style="left:224px;top:366.84px;transform:scaleX(0.9207);">0x140018f4a</div>
<div class="t" id="t77" style="left:300px;top:366.84px;transform:scaleX(0.9246);">0x5</div>
<div class="t" id="t78" style="left:363px;top:366.84px;transform:scaleX(1.0546);">jmp</div>
<div class="t" id="t79" style="left:387px;top:366.84px;transform:scaleX(0.9231);">0x1bc981c30</div>
<div class="t" id="t80" style="left:224px;top:385.84px;transform:scaleX(0.9207);">0x140018f87</div>
<div class="t" id="t81" style="left:300px;top:385.84px;transform:scaleX(0.9246);">0x5</div>
<div class="t" id="t82" style="left:363px;top:385.84px;transform:scaleX(1.0546);">jmp</div>
<div class="t" id="t83" style="left:387px;top:385.84px;transform:scaleX(0.9058);">0x153217865</div>
<div class="t" id="t84" style="left:224px;top:404.84px;transform:scaleX(0.9058);">0x14001906e</div>
<div class="t" id="t85" style="left:300px;top:404.84px;transform:scaleX(0.9246);">0x2</div>
<div class="t" id="t86" style="left:363px;top:404.84px;transform:scaleX(1.0546);">jmp</div>
<div class="t" id="t87" style="left:387px;top:404.84px;transform:scaleX(1.0428);">qword [rdx]</div>
<div class="t" id="t88" style="left:224px;top:423.84px;transform:scaleX(0.9073);">0x1400191c6</div>
<div class="t" id="t89" style="left:300px;top:423.84px;transform:scaleX(0.9246);">0x5</div>
<div class="t" id="t90" style="left:363px;top:423.84px;transform:scaleX(1.0546);">jmp</div>
<div class="t" id="t91" style="left:387px;top:423.84px;transform:scaleX(0.9410);">0xfeba699c</div>
<div class="t" id="t92" style="left:224px;top:442.84px;transform:scaleX(0.9058);">0x1400193e6</div>
<div class="t" id="t93" style="left:300px;top:442.84px;transform:scaleX(0.9246);">0x3</div>
<div class="t" id="t94" style="left:363px;top:442.84px;transform:scaleX(1.0546);">jmp</div>
<div class="t" id="t95" style="left:387px;top:442.84px;transform:scaleX(0.9073);">0x1400193c5</div>
<div class="t" id="t96" style="left:224px;top:461.84px;transform:scaleX(0.9058);">0x1400193e7</div>
<div class="t" id="t97" style="left:300px;top:461.84px;transform:scaleX(0.9246);">0x2</div>
<div class="t" id="t98" style="left:363px;top:461.84px;transform:scaleX(1.0546);">jmp</div>
<div class="t" id="t99" style="left:387px;top:461.84px;transform:scaleX(0.9073);">0x1400193c5</div>
<div class="t" id="t100" style="left:224px;top:480.84px;transform:scaleX(0.9207);">0x14001944f</div>
<div class="t" id="t101" style="left:300px;top:480.84px;transform:scaleX(0.9246);">0x2</div>
<div class="t" id="t102" style="left:363px;top:480.84px;transform:scaleX(1.0546);">jmp</div>
<div class="t" id="t103" style="left:387px;top:480.84px;transform:scaleX(0.9058);">0x140019488</div>
<div class="t" id="t104" style="left:224px;top:499.84px;transform:scaleX(0.9196);">0x14001945b</div>
<div class="t" id="t105" style="left:300px;top:499.84px;transform:scaleX(0.9246);">0x5</div>
<div class="t" id="t106" style="left:363px;top:499.84px;transform:scaleX(1.0546);">jmp</div>
<div class="t" id="t107" style="left:387px;top:499.84px;transform:scaleX(0.9196);">0x1a1b87986</div>
<div class="t" id="t108" style="left:224px;top:518.84px;transform:scaleX(0.9073);">0x14001951c</div>
<div class="t" id="t109" style="left:300px;top:518.84px;transform:scaleX(0.9246);">0x2</div>
<div class="t" id="t110" style="left:363px;top:518.84px;transform:scaleX(1.0546);">jmp</div>
<div class="t" id="t111" style="left:387px;top:518.84px;transform:scaleX(0.9058);">0x140019595</div>
<div class="t" id="t112" style="left:224px;top:537.84px;transform:scaleX(0.9058);">0x140019523</div>
<div class="t" id="t113" style="left:300px;top:537.84px;transform:scaleX(0.9246);">0x5</div>
<div class="t" id="t114" style="left:363px;top:537.84px;transform:scaleX(1.0546);">jmp</div>
<div class="t" id="t115" style="left:387px;top:537.84px;transform:scaleX(0.9351);">0x13c6b7b59</div>
<div class="t" id="t116" style="left:224px;top:556.84px;transform:scaleX(0.9196);">0x14001953d</div>
<div class="t" id="t117" style="left:300px;top:556.84px;transform:scaleX(0.9246);">0x2</div>
<div class="t" id="t118" style="left:363px;top:556.84px;transform:scaleX(1.0546);">jmp</div>
<div class="t" id="t119" style="left:387px;top:556.84px;transform:scaleX(0.9058);">0x14001950a</div>
<div class="t" id="t120" style="left:224px;top:575.84px;transform:scaleX(0.9196);">0x1400195b2</div>
<div class="t" id="t121" style="left:300px;top:575.84px;transform:scaleX(0.9246);">0x2</div>
<div class="t" id="t122" style="left:363px;top:575.84px;transform:scaleX(1.0546);">jmp</div>
<div class="t" id="t123" style="left:387px;top:575.84px;transform:scaleX(0.9058);">0x140019631</div>
<div class="t" id="t124" style="left:224px;top:594.84px;transform:scaleX(0.9058);">0x140019754</div>
<div class="t" id="t125" style="left:300px;top:594.84px;transform:scaleX(0.9246);">0x2</div>
<div class="t" id="t126" style="left:363px;top:594.84px;transform:scaleX(1.0546);">jmp</div>
<div class="t" id="t127" style="left:387px;top:594.84px;transform:scaleX(0.9073);">0x14001978c</div>
<div class="t" id="t128" style="left:224px;top:613.84px;transform:scaleX(0.9058);">0x1400197e7</div>
<div class="t" id="t129" style="left:300px;top:613.84px;transform:scaleX(0.9246);">0x5</div>
<div class="t" id="t130" style="left:363px;top:613.84px;transform:scaleX(1.0546);">jmp</div>
<div class="t" id="t131" style="left:387px;top:613.84px;transform:scaleX(0.9490);">0x10bdae7dc</div>
<div class="t" id="t132" style="left:224px;top:632.84px;transform:scaleX(0.9333);">0x140019db4</div>
<div class="t" id="t133" style="left:300px;top:632.84px;transform:scaleX(0.9246);">0x5</div>
<div class="t" id="t134" style="left:363px;top:632.84px;transform:scaleX(1.0546);">jmp</div>
<div class="t" id="t135" style="left:387px;top:632.84px;transform:scaleX(0.9212);">0x186bc0342</div>
<div class="t" id="t136" style="left:224px;top:651.84px;transform:scaleX(0.9058);">0x140019e48</div>
<div class="t" id="t137" style="left:300px;top:651.84px;transform:scaleX(0.9246);">0x2</div>
<div class="t" id="t138" style="left:363px;top:651.84px;transform:scaleX(1.0546);">jmp</div>
<div class="t" id="t139" style="left:387px;top:651.84px;transform:scaleX(0.9196);">0x140019de0</div>
<div class="t" id="t140" style="left:224px;top:670.84px;transform:scaleX(0.9196);">0x140019ed2</div>
<div class="t" id="t141" style="left:300px;top:670.84px;transform:scaleX(0.9246);">0x5</div>
<div class="t" id="t142" style="left:363px;top:670.84px;transform:scaleX(1.0546);">jmp</div>
<div class="t" id="t143" style="left:387px;top:670.84px;transform:scaleX(0.9389);">0xfd029864</div>
<div class="t" id="t144" style="left:215.5px;top:687.84px;transform:scaleX(0.8633);">jmp</div>
<div class="t" id="t145" style="left:520.5px;top:687.84px;transform:scaleX(0.9319);">Поиск</div>
<div class="t" id="t146" style="left:583px;top:687.84px;transform:scaleX(0.9135);">Поиск по:</div>
<div class="t" id="t147" style="left:646.5px;top:687.84px;transform:scaleX(0.8922);">ассемблерный код</div>
<div class="t" id="t148" style="left:823.7px;top:687.84px;transform:scaleX(0.9407);">Искать в:</div>
<div class="t" id="t149" style="left:886.5px;top:687.84px;transform:scaleX(0.8940);">Current mapped section</div>
<div class="t" id="t150" style="left:225.2px;top:708.84px;transform:scaleX(0.8838);">Da...</div>
<div class="t" id="t151" style="left:274px;top:708.84px;transform:scaleX(0.9277);">St...</div>
<div class="t" id="t152" style="left:320.5px;top:708.84px;transform:scaleX(0.8181);">Им...</div>
<div class="t" id="t153" style="left:368.7px;top:708.84px;transform:scaleX(1.0294);">Ту...</div>
<div class="t" id="t154" style="left:417.3px;top:709.84px;transform:scaleX(0.8628);">Se...</div>
<div class="t" id="t155" style="left:465.2px;top:708.84px;transform:scaleX(0.8693);">Ре...</div>
<div class="t" id="t156" style="left:513.4px;top:708.84px;transform:scaleX(0.8590);">Бр...</div>
<div class="t" id="t157" style="left:561.1px;top:708.84px;transform:scaleX(0.8574);">Ri...</div>
<div class="t" id="t158" style="left:606.6px;top:708.84px;transform:scaleX(0.8771);">Гра...</div>
<div class="t" id="t159" style="left:658.1px;top:708.84px;transform:scaleX(0.8835);">Дизассемблиров...</div>
<div class="t" id="t160" style="left:776.2px;top:708.84px;transform:scaleX(0.9067);">Гр...</div>
<div class="t" id="t161" style="left:822.7px;top:708.84px;transform:scaleX(0.9229);">Шестнадцатери...</div>
<div class="t" id="t162" style="left:940.5px;top:708.84px;transform:scaleX(0.9186);">Декомпилят...</div>
</body></html>
